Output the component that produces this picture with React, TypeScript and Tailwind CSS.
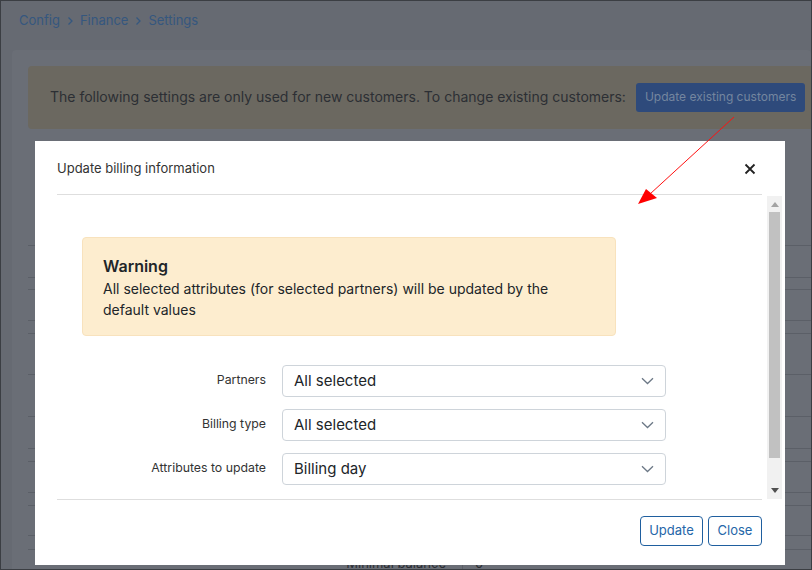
import React from "react";

function Chevron() {
  return (
    <svg width="13" height="8" viewBox="0 0 13 8" fill="none">
      <path d="M1 1.2 L6.5 6.5 L12 1.2" stroke="#6c7886" strokeWidth="1.3" />
    </svg>
  );
}

function Crumb() {
  return (
    <svg width="8" height="10" viewBox="0 0 8 10" fill="none" className="mx-[6px]">
      <path d="M2.5 1.5 L6 5 L2.5 8.5" stroke="#35577f" strokeWidth="1.3" />
    </svg>
  );
}

function Select({ value }: { value: string }) {
  return (
    <div className="w-[384px] h-[32px] border border-[#ced4da] rounded-[4px] flex items-center justify-between pl-[11px] pr-[11px] text-[15px] text-[#212529]">
      <span>{value}</span>
      <Chevron />
    </div>
  );
}

export default function App() {
  const rowHeights = [116, 32, 12, 31, 13, 41, 42, 32, 13, 31, 13, 30, 14];
  return (
    <div
      className="relative w-[812px] h-[570px] overflow-hidden bg-[#666a72] border border-[#3b3e43]"
      style={{ fontFamily: "Inter, 'Noto Sans', sans-serif" }}
    >
      {/* breadcrumb */}
      <div className="flex items-center pl-[18px] pt-[3px] h-[37px] text-[13px] text-[#35577f]">
        <span>Config</span>
        <Crumb />
        <span>Finance</span>
        <Crumb />
        <span>Settings</span>
      </div>
      {/* card */}
      <div className="ml-[11px] mt-[12px] bg-[#6a6e76] rounded-[4px] pt-[16px] pl-[16px]">
        <div className="h-[63px] bg-[#6b6860] rounded-l-[4px] flex items-center pl-[22px] pb-[3px] text-[14px] text-[#2c2f34]">
          <span className="whitespace-nowrap">
            The following settings are only used for new customers. To change existing customers:
          </span>
          <div className="ml-[10px] mt-[2px] h-[29px] px-[9px] bg-[#2e4a7b] rounded-[3px] flex items-center text-[12px] text-[#74869f] whitespace-nowrap">
            Update existing customers
          </div>
        </div>
        <div className="flex flex-col">
          {rowHeights.map((h, i) => (
            <div
              key={i}
              className={i === 0 ? "" : "border-t border-[#5b5f67]"}
              style={{ height: h }}
            />
          ))}
          <div className="border-t border-[#5b5f67] h-[30px] flex">
            <div className="w-[434px] text-right pr-[16px] pt-[4px] text-[13px] text-[#2c2f34]">Minimal balance</div>
            <div className="border-l border-[#5b5f67] pl-[12px] pt-[4px] text-[13px] text-[#2c2f34]">0</div>
          </div>
        </div>
      </div>

      {/* modal */}
      <div className="absolute left-[34px] top-[140px] w-[750px] h-[424px] bg-white flex flex-col">
        <div className="ml-[22px] mr-[23px] h-[54px] border-b border-[#dedede] flex items-center justify-between pt-[2px] text-[13px] text-[#333333]">
          <span>Update billing information</span>
          <svg width="12" height="12" viewBox="0 0 12 12" className="mr-[6px]">
            <path d="M1.5 1.5 L10.5 10.5 M10.5 1.5 L1.5 10.5" stroke="#222" strokeWidth="1.8" />
          </svg>
        </div>
        <div className="flex h-[304px]">
          <div className="ml-[22px] w-[705px] pl-[25px] pt-[42px]">
            <div className="w-[534px] h-[99px] bg-[#fdedcf] border border-[#f8e2bd] rounded-[4px] pl-[20px] pt-[16px]">
              <div className="text-[16px] font-semibold text-[#212529] leading-[24px]">Warning</div>
              <div className="text-[14px] text-[#212529] leading-[21px]">
                All selected attributes (for selected partners) will be updated by the
                <br />
                default values
              </div>
            </div>
            <div className="mt-[29px] flex flex-col gap-[12px]">
              {[
                ["Partners", "All selected"],
                ["Billing type", "All selected"],
                ["Attributes to update", "Billing day"],
              ].map(([l, v]) => (
                <div key={l} className="flex items-center gap-[16px]">
                  <div className="w-[184px] text-right text-[12.3px] text-[#333333] pb-[1px]">{l}</div>
                  <Select value={v} />
                </div>
              ))}
            </div>
          </div>
          {/* scrollbar */}
          <div className="ml-[5px] mt-[1px] w-[15px] h-[303px] bg-[#f1f1f1] flex flex-col items-center">
            <svg width="8" height="5" viewBox="0 0 8 5" className="mt-[6px]">
              <path d="M0 5 L4 0 L8 5 Z" fill="#a3a3a3" />
            </svg>
            <div className="mt-[5px] w-[11px] h-[246px] bg-[#c1c1c1]" />
            <svg width="8" height="5" viewBox="0 0 8 5" className="mt-[30px]">
              <path d="M0 0 L8 0 L4 5 Z" fill="#505050" />
            </svg>
          </div>
        </div>
        <div className="ml-[22px] mr-[23px] border-t border-[#dedede] pt-[16px] flex justify-end gap-[5px]">
          <div className="w-[63px] h-[30px] border border-[#1f5f9f] rounded-[4px] flex items-center justify-center text-[13px] text-[#2566a8]">
            Update
          </div>
          <div className="w-[54px] h-[30px] border border-[#1f5f9f] rounded-[4px] flex items-center justify-center text-[13px] text-[#2566a8]">
            Close
          </div>
        </div>
      </div>

      {/* red arrow */}
      <svg className="absolute left-0 top-0" width="812" height="570" viewBox="0 0 812 570">
        <line x1="733" y1="116" x2="649" y2="193" stroke="#ff1010" strokeWidth="1" />
        <path d="M637 203 L645 188 L656 197 Z" fill="#ff0000" />
      </svg>
    </div>
  );
}
